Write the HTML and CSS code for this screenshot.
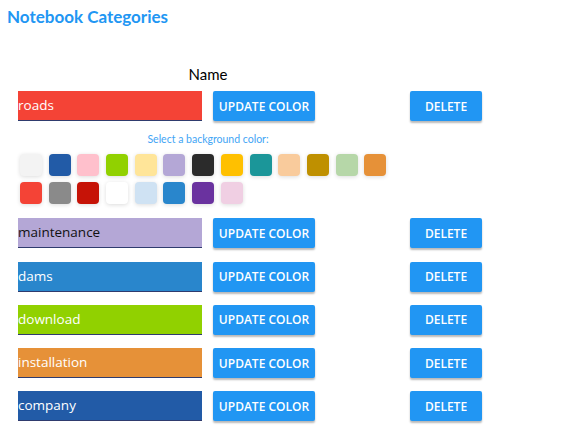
FILE: index.html
```html
<!DOCTYPE html>
<html>
<head>
<meta charset="utf-8">
<link rel="stylesheet" href="styles.css">
</head>
<body>
<h1 class="title">Notebook Categories</h1>
<div class="table">
  <div class="head">Name</div>

  <div class="row">
    <div class="cell-name"><div class="name-box light-text" style="background:#f44336">roads</div></div>
    <div class="cell-btn"><button class="btn btn-update">UPDATE COLOR</button></div>
    <div class="cell-del"><button class="btn btn-delete">DELETE</button></div>
  </div>

  <div class="picker">
    <div class="picker-label">Select a background color:</div>
    <div class="swatches">
      <span class="swatch" style="background:#f3f3f3"></span>
      <span class="swatch" style="background:#225ba7"></span>
      <span class="swatch" style="background:#ffc0cc"></span>
      <span class="swatch" style="background:#91d100"></span>
      <span class="swatch" style="background:#ffe599"></span>
      <span class="swatch" style="background:#b4a7d6"></span>
      <span class="swatch" style="background:#2b2b2b"></span>
      <span class="swatch" style="background:#ffc000"></span>
      <span class="swatch" style="background:#1b9699"></span>
      <span class="swatch" style="background:#f9cb9c"></span>
      <span class="swatch" style="background:#bf9000"></span>
      <span class="swatch" style="background:#b6d7a8"></span>
      <span class="swatch" style="background:#e69138"></span>
      <span class="swatch" style="background:#f44336"></span>
      <span class="swatch" style="background:#8a8a8a"></span>
      <span class="swatch" style="background:#c61307"></span>
      <span class="swatch" style="background:#ffffff"></span>
      <span class="swatch" style="background:#cfe2f3"></span>
      <span class="swatch" style="background:#2986cc"></span>
      <span class="swatch" style="background:#6a329f"></span>
      <span class="swatch" style="background:#f0cfe3"></span>
    </div>
  </div>

  <div class="row">
    <div class="cell-name"><div class="name-box dark-text" style="background:#b4a7d6">maintenance</div></div>
    <div class="cell-btn"><button class="btn btn-update">UPDATE COLOR</button></div>
    <div class="cell-del"><button class="btn btn-delete">DELETE</button></div>
  </div>
  <div class="row">
    <div class="cell-name"><div class="name-box light-text" style="background:#2986cc">dams</div></div>
    <div class="cell-btn"><button class="btn btn-update">UPDATE COLOR</button></div>
    <div class="cell-del"><button class="btn btn-delete">DELETE</button></div>
  </div>
  <div class="row">
    <div class="cell-name"><div class="name-box light-text" style="background:#91d100">download</div></div>
    <div class="cell-btn"><button class="btn btn-update">UPDATE COLOR</button></div>
    <div class="cell-del"><button class="btn btn-delete">DELETE</button></div>
  </div>
  <div class="row">
    <div class="cell-name"><div class="name-box light-text" style="background:#e69138">installation</div></div>
    <div class="cell-btn"><button class="btn btn-update">UPDATE COLOR</button></div>
    <div class="cell-del"><button class="btn btn-delete">DELETE</button></div>
  </div>
  <div class="row">
    <div class="cell-name"><div class="name-box light-text" style="background:#225ba7">company</div></div>
    <div class="cell-btn"><button class="btn btn-update">UPDATE COLOR</button></div>
    <div class="cell-del"><button class="btn btn-delete">DELETE</button></div>
  </div>
</div>
</body>
</html>
```
FILE: styles.css
```css
* { box-sizing: border-box; }
html, body { margin: 0; padding: 0; background: #fff; }
body { font-family: "Open Sans", "Noto Sans", sans-serif; color: #000; }

.title {
  margin: 0;
  padding: 6px 0 0 7px;
  font-family: Lato, sans-serif;
  font-weight: 700;
  font-size: 17px;
  line-height: 22px;
  color: #2196f3;
}

.table {
  margin: 0 0 0 18px;
  padding-top: 37px;
}

.head {
  width: 380px;
  text-align: center;
  font-family: Lato, sans-serif;
  font-size: 15px;
  line-height: 18px;
  height: 18px;
  margin-bottom: 8px;
}

.row {
  display: grid;
  grid-template-columns: 195px 197px 72px;
  height: 30px;
  margin-bottom: 13.3px;
}

.name-box {
  width: 184px;
  height: 30px;
  border-bottom: 1px solid #2f3b6e;
  font-size: 13.5px;
  line-height: 29px;
  padding: 0;
  white-space: nowrap;
  overflow: hidden;
}
.light-text { color: #fff; }
.dark-text { color: #111; }

.btn {
  height: 30px;
  border: none;
  border-radius: 2px;
  background: #2196f3;
  color: #fff;
  font-family: "Open Sans", "Noto Sans", sans-serif;
  font-weight: 600;
  font-size: 12px;
  padding: 0;
  box-shadow: 0 2px 2px rgba(0,0,0,0.28);
  cursor: pointer;
}
.btn-update { width: 102px; }
.btn-delete { width: 72px; }

.picker {
  margin-top: -2px;
  margin-bottom: 14px;
}
.picker-label {
  width: 380px;
  text-align: center;
  font-family: Lato, sans-serif;
  font-size: 10.5px;
  line-height: 14px;
  color: #42a5f5;
  margin-bottom: 8px;
}
.swatches {
  display: flex;
  flex-wrap: wrap;
  width: 380px;
  padding-left: 2px;
  column-gap: 6.7px;
  row-gap: 6px;
}
.swatch {
  display: block;
  width: 22px;
  height: 22px;
  border-radius: 4px;
  box-shadow: 0 1px 4px rgba(0,0,0,0.14);
}
```
